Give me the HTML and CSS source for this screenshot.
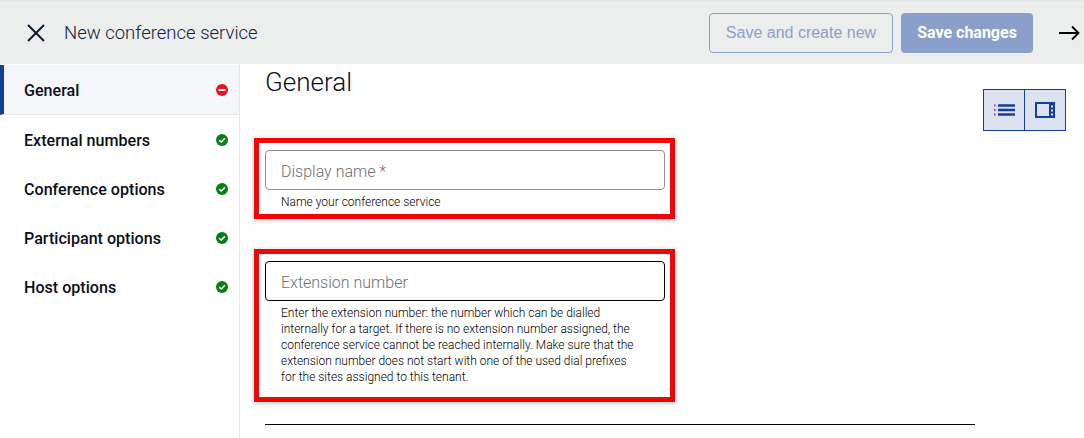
FILE: index.html
```html
<!DOCTYPE html>
<html lang="en">
<head>
    <meta charset="UTF-8">
    <title>New conference service</title>
    <link rel="stylesheet" href="styles.css">
</head>
<body>
    <header class="topbar">
        <svg class="close-icon" width="20" height="20" viewBox="0 0 20 20"><path d="M2 2l16 16M18 2L2 18" fill="none" stroke="#0b1a33" stroke-width="2"/></svg>
        <span class="topbar-title">New conference service</span>
        <button class="btn btn-outline">Save and create new</button>
        <button class="btn btn-filled">Save changes</button>
        <svg class="arrow-icon" width="21" height="16" viewBox="0 0 21 16"><path d="M0 8h19.500M13 1.500L19.500 8L13 14.500" fill="none" stroke="#000" stroke-width="1.800"/></svg>
    </header>
    <div class="layout">
        <nav class="sidebar">
            <a class="nav-item active">General
                <svg class="status" width="12" height="12" viewBox="0 0 12 12"><circle cx="6" cy="6" r="6" fill="#e8111c"/><path d="M2.500 6h7" stroke="#fff" stroke-width="2"/></svg>
            </a>
            <a class="nav-item">External numbers
                <svg class="status" width="12" height="12" viewBox="0 0 12 12"><circle cx="6" cy="6" r="6" fill="#0a7d14"/><path d="M3.200 6.200l2 1.800 3.600-3.600" fill="none" stroke="#fff" stroke-width="1.500"/></svg>
            </a>
            <a class="nav-item">Conference options
                <svg class="status" width="12" height="12" viewBox="0 0 12 12"><circle cx="6" cy="6" r="6" fill="#0a7d14"/><path d="M3.200 6.200l2 1.800 3.600-3.600" fill="none" stroke="#fff" stroke-width="1.500"/></svg>
            </a>
            <a class="nav-item">Participant options
                <svg class="status" width="12" height="12" viewBox="0 0 12 12"><circle cx="6" cy="6" r="6" fill="#0a7d14"/><path d="M3.200 6.200l2 1.800 3.600-3.600" fill="none" stroke="#fff" stroke-width="1.500"/></svg>
            </a>
            <a class="nav-item">Host options
                <svg class="status" width="12" height="12" viewBox="0 0 12 12"><circle cx="6" cy="6" r="6" fill="#0a7d14"/><path d="M3.200 6.200l2 1.800 3.600-3.600" fill="none" stroke="#fff" stroke-width="1.500"/></svg>
            </a>
        </nav>
        <main class="content">
            <div class="content-head">
                <h1 class="page-title">General</h1>
                <div class="view-toggle">
                    <span class="toggle-btn">
                        <svg width="21" height="12" viewBox="0 0 21 12"><path d="M0 1.500h1.500M0 6h1.500M0 10.500h1.500" stroke="#7a4f8f" stroke-width="2"/><path d="M4 1.500H21M4 6H21M4 10.500H21" stroke="#15409a" stroke-width="2.400"/></svg>
                    </span>
                    <span class="toggle-btn">
                        <svg width="20" height="16" viewBox="0 0 20 16"><rect x="1" y="1" width="18" height="14" fill="none" stroke="#15409a" stroke-width="2"/><path d="M14 0h6v16h-6z" fill="#15409a"/><path d="M16 3.500h2v2h-2zM16 7.500h2v2h-2zM16 11.500h2v2h-2z" fill="#dce1ee"/></svg>
                    </span>
                </div>
            </div>
            <section class="field-box first">
                <div class="field-input">Display name *</div>
                <p class="field-help">Name your conference service</p>
            </section>
            <section class="field-box second">
                <div class="field-input focused">Extension number</div>
                <p class="field-help">Enter the extension number: the number which can be dialled<br>internally for a target. If there is no extension number assigned, the<br>conference service cannot be reached internally. Make sure that the<br>extension number does not start with one of the used dial prefixes<br>for the sites assigned to this tenant.</p>
            </section>
            <hr class="divider">
        </main>
    </div>
</body>
</html>
```

FILE: styles.css
```css
html, body {
    margin: 0;
    height: 438px;
    overflow: hidden;
    background-color: #fff;
    font-family: Roboto, sans-serif;
    color: #000;
}
.topbar {
    display: flex;
    align-items: center;
    height: 64px;
    box-sizing: border-box;
    padding: 0 4px 0 26px;
    background-color: #eceeee;
    border-top: 1px solid #e6e8ec;
}
.close-icon {
    margin-right: 18px;
}
.topbar-title {
    flex: 1;
    font-size: 18.5px;
    font-weight: 300;
    color: #10203a;
}
.btn {
    height: 40px;
    box-sizing: border-box;
    border-radius: 4px;
    font-size: 16px;
}
.btn-outline {
    width: 184px;
    margin-right: 8px;
    padding: 0;
    background: transparent;
    border: 1px solid #8aa0cb;
    color: #8aa0cb;
    font-family: "Liberation Sans", sans-serif;
}
.btn-filled {
    width: 132px;
    margin-right: 26px;
    padding: 0;
    background-color: #8aa0cb;
    border: none;
    color: #fff;
    font-family: Roboto, sans-serif;
    font-weight: 700;
}
.layout {
    display: flex;
    height: 374px;
}
.sidebar {
    width: 240px;
    box-sizing: border-box;
    border-right: 1px solid #e4e6ea;
    flex-shrink: 0;
}
.nav-item {
    display: flex;
    align-items: center;
    justify-content: space-between;
    height: 47px;
    padding: 2px 11px 0 24px;
    font-size: 16.1px;
    font-weight: 500;
    color: #0a0f1a;
}
.nav-item.active {
    margin-top: 1px;
    padding-left: 20px;
    border-left: 4px solid #15409a;
    border-bottom: 1px solid #e4e6ea;
    background-color: #f5f6f9;
}
.status {
    margin-top: -2px;
}
.content {
    flex: 1;
    padding: 0 18px 0 14px;
}
.content-head {
    display: flex;
    justify-content: space-between;
    align-items: flex-start;
    height: 74px;
}
.page-title {
    margin: 3px 0 0 11px;
    font-size: 26px;
    line-height: 30px;
    font-weight: 300;
    color: #0a1020;
}
.view-toggle {
    display: flex;
    margin-top: 25px;
    border: 1px solid #15409a;
    background-color: #dce1ee;
}
.toggle-btn {
    display: flex;
    align-items: center;
    justify-content: center;
    width: 40px;
    height: 40px;
}
.toggle-btn + .toggle-btn {
    box-sizing: border-box;
    width: 41px;
    border-left: 1px solid #15409a;
}
.field-box {
    width: 421px;
    box-sizing: border-box;
    padding: 7px 5px 0 6px;
    border: 5px solid #ec0808;
    box-shadow: 0 1px 5px rgba(0, 0, 0, 0.25);
}
.field-box.first {
    height: 81px;
}
.field-box.second {
    height: 153px;
    margin-top: 30px;
}
.field-input {
    height: 40px;
    box-sizing: border-box;
    padding-left: 15px;
    border: 1px solid #909090;
    border-radius: 4px;
    font-size: 16px;
    font-weight: 300;
    line-height: 40px;
    color: #6f6f6f;
}
.field-input::first-line {
    line-height: 42px;
}
.field-input.focused {
    border-color: #000;
}
.field-help {
    margin: 4px 0 0 16px;
    font-size: 12px;
    font-weight: 300;
    line-height: 16px;
    color: #000;
}
.divider {
    width: 710px;
    margin: 22px 0 0 11px;
    border: none;
    border-top: 1px solid #000;
}
```
